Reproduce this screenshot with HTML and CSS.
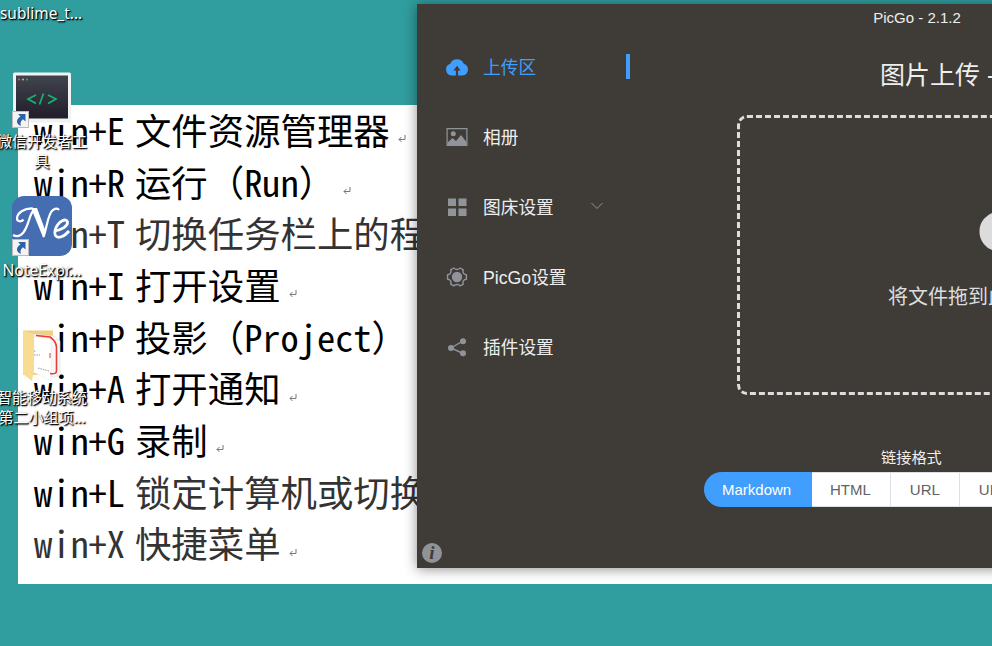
FILE: index.html
```html
<!DOCTYPE html>
<html lang="zh-CN">
<head>
<meta charset="utf-8">
<title>PicGo</title>
<link rel="stylesheet" href="styles.css">
</head>
<body>
<main class="desktop">
  <section class="doc">
    <p><span>win+E</span><span>文件资源管理器</span><svg class="ret" viewBox="0 0 8 8"><path d="M7 0v4.500H1M3.500 2L1 4.500L3.500 7"/></svg></p>
    <p><span>win+R</span><span>运行（Run）</span><svg class="ret" viewBox="0 0 8 8"><path d="M7 0v4.500H1M3.500 2L1 4.500L3.500 7"/></svg></p>
    <p class="soft"><span>win+T</span><span>切换任务栏上的程序</span></p>
    <p><span>win+I</span><span>打开设置</span><svg class="ret" viewBox="0 0 8 8"><path d="M7 0v4.500H1M3.500 2L1 4.500L3.500 7"/></svg></p>
    <p><span>win+P</span><span>投影（Project）</span></p>
    <p><span>win+A</span><span>打开通知</span><svg class="ret" viewBox="0 0 8 8"><path d="M7 0v4.500H1M3.500 2L1 4.500L3.500 7"/></svg></p>
    <p><span>win+G</span><span>录制</span><svg class="ret" viewBox="0 0 8 8"><path d="M7 0v4.500H1M3.500 2L1 4.500L3.500 7"/></svg></p>
    <p><span>win+L</span><span class="soft">锁定计算机或切换</span></p>
    <p class="soft"><span>win+X</span><span>快捷菜单</span><svg class="ret" viewBox="0 0 8 8"><path d="M7 0v4.500H1M3.500 2L1 4.500L3.500 7"/></svg></p>
  </section>

  <div class="shortcut sublime"><span>sublime_t...</span></div>
  <div class="shortcut wechat">
    <svg width="60" height="56" viewBox="0 0 60 56">
      <defs><linearGradient id="scr" x2="0" y2="1"><stop offset="0" stop-color="#41444e"/><stop offset="1" stop-color="#211d2a"/></linearGradient></defs>
      <rect x="1" y="0.500" width="58" height="50" rx="1.500" fill="#f1f2f2"/>
      <rect x="4" y="3.500" width="52" height="43" fill="url(#scr)"/>
      <circle cx="7" cy="7.500" r="1" fill="#e0575b"/><circle cx="11" cy="7.500" r="1" fill="#d8c44a"/><circle cx="15" cy="7.500" r="1" fill="#3faa58"/>
      <path d="M24 23l-8 4 8 4.500M36 23l8 4-8 4.500M31.500 21.500l-4 11" fill="none" stroke="#14b574" stroke-width="1.700"/>
      <rect x="0.500" y="39.500" width="16" height="16" fill="#f4f4f4" stroke="#bbb"/>
      <path d="M6 42h7.500v7.500L11 47.300c-2.500 1.700-3 4-2 6.700-5.500-2-5-7-.5-9.500z" fill="#2c62a5"/>
    </svg>
    <span>微信开发者工<br>具</span>
  </div>
  <div class="shortcut note">
    <svg width="60" height="60" viewBox="0 0 60 60">
      <rect width="60" height="60" rx="12" fill="#456db2"/>
      <path d="M1 39c5 3 10 0 13-7C18 24 18 16 23 13M21 12.500C12 12 5 17 5 22.500c0 3 4 4 6.500 1" fill="none" stroke="#fff" stroke-width="2.200"/>
      <path d="M19 12h6L33.500 35l-2.200 7z" fill="#fff"/>
      <path d="M31.500 41C35 31 36 17 41 14c2.500-1.500 5-1.500 6 0" fill="none" stroke="#fff" stroke-width="2.200"/>
      <path d="M42 35c8-1 14-5 13.500-9-.8-4.500-9-1-12 7-2 7 1 9 5 8 4-1 6-3 8.500-6" fill="none" stroke="#fff" stroke-width="2.800"/>
      <rect x="0.500" y="43.500" width="16" height="16" fill="#f4f4f4" stroke="#bbb"/>
      <path d="M6 46h7.500v7.500L11 51.300c-2.500 1.700-3 4-2 6.700-5.500-2-5-7-.5-9.500z" fill="#2c62a5"/>
    </svg>
    <span>NoteExpr...</span>
  </div>
  <div class="shortcut folder">
    <svg width="40" height="54" viewBox="0 0 40 54">
      <path d="M1 1.500h30V46H1z" fill="#f0d080"/>
      <path d="M11 5l21 2 6 5v34l-6 2-21-5z" fill="#f7f7f7" stroke="#ddd" stroke-width=".6"/>
      <path d="M12 7l17 3v42l-18-9z" fill="#fff" stroke="#e4e4e4" stroke-width=".5"/>
      <path d="M14 6.500l14 1.500q6 4 6.500 10v24q0 3.500-6.500 2.500" fill="none" stroke="#e83c36" stroke-width="1.600"/>
      <path d="M12 22h2m-2 4h6M16 39l11 3" stroke="#999" stroke-dasharray="1.500 1"/>
      <path d="M28 24v5" stroke="#e83c36"/>
      <path d="M1 1.500l11 3.500v35l-2 12-9-7z" fill="#f7dc91"/>
    </svg>
    <span>智能移动系统<br>第二小组项...</span>
  </div>

  <section class="window">
    <header>PicGo - 2.1.2</header>
    <div class="body">
      <nav>
        <a class="active"><svg viewBox="0 0 24 24"><path fill="currentColor" d="M18.700 8.800A7 6.500 0 0 0 5.300 8.800 6 6 0 0 0 6.500 20.500H10.900V15.500H8.400L12 10.800 15.600 15.500H13.100V20.500H17.500A6 6 0 0 0 18.700 8.800z"/></svg><span>上传区</span></a>
        <a><svg viewBox="0 0 24 24"><path fill="none" stroke="currentColor" stroke-width="1.200" d="M2.100 3.600h19.800v16.800H2.100z"/><circle cx="8.300" cy="8.700" r="2.500" fill="currentColor"/><path fill="currentColor" d="M2.500 20v-2.500L7.500 13l3.500 3 5-6 5.500 7V20z"/></svg><span>相册</span></a>
        <a><svg viewBox="0 0 24 24"><path fill="currentColor" d="M3 3.500h8v7.500H3zM13.500 3.500h8v7.500h-8zM3 13.500h8v7.500H3zM13.500 13.500h8v7.500h-8z"/></svg><span>图床设置</span><svg class="chev" viewBox="0 0 14 14"><path fill="none" stroke="currentColor" d="M1.500 4l5.500 5.500L12.500 4"/></svg></a>
        <a><svg viewBox="0 0 24 24"><circle cx="12" cy="12" r="5.200" fill="currentColor"/><path transform="translate(1.300 1.300) scale(.89)" fill="none" stroke="currentColor" stroke-width="1.600" stroke-linejoin="round" d="M8.500 1.900c1.300 2.200 5.700 2.200 7 0l3.600 2.100c-1.300 2.300.4 5.400 3.500 5.500v5c-3.100.1-4.800 3.200-3.500 5.500l-3.600 2.100c-1.300-2.200-5.700-2.200-7 0L4.900 20c1.300-2.300-.4-5.400-3.500-5.500v-5C4.500 9.400 6.200 6.300 4.900 4z"/></svg><span>PicGo设置</span></a>
        <a><svg viewBox="0 0 24 24"><path stroke="currentColor" stroke-width="1.400" fill="none" d="M18 6L6 13l12 5.500"/><g fill="currentColor"><circle cx="18" cy="6.200" r="3"/><circle cx="6" cy="13" r="3"/><circle cx="18" cy="18.200" r="3"/></g></svg><span>插件设置</span></a>
      </nav>
      <div class="content">
        <h1>图片上传 -</h1>
        <div class="drop">
          <svg width="84" height="64" viewBox="0 0 84 64"><path fill="#dcdcdc" d="M64 20A23 23 0 0 0 20 20 20 20 0 0 0 20 59H64A20 20 0 0 0 64 20z"/></svg>
          <p>将文件拖到此处</p>
        </div>
        <div class="fmt">链接格式</div>
        <div class="group"><b>Markdown</b><span>HTML</span><span>URL</span><span>UBB</span></div>
      </div>
    </div>
    <div class="info">i</div>
  </section>
</main>
</body>
</html>
```
FILE: styles.css
```css
body { margin: 0; }
.desktop {
  position: relative;
  width: 992px;
  height: 646px;
  overflow: hidden;
  background: #309d9e;
  font-family: "Liberation Sans", "Noto Sans CJK SC", sans-serif;
}
.doc {
  position: absolute;
  left: 18px;
  top: 105px;
  width: 974px;
  height: 479px;
  background: #fff;
  color: #000;
  box-sizing: border-box;
  padding: 0 0 0 16px;
}
.doc p {
  margin: 0;
  height: 51.700px;
  display: flex;
  align-items: center;
  white-space: nowrap;
  font: 36.400px/49px "Noto Sans Mono CJK SC", "Noto Sans CJK SC", monospace;
}
.doc p span { padding-bottom: 3px; }
.doc p span:first-child { margin-right: 10px; }
.doc .soft { color: #333; }
.ret { width: 8px; height: 8px; margin: 17px 0 0 8px; fill: none; stroke: #777; stroke-width: 1; }

.shortcut {
  position: absolute;
  display: flex;
  flex-direction: column;
  align-items: center;
  color: #fff;
  font: 15px/20px "Noto Sans", "Noto Sans CJK SC", sans-serif;
  text-align: center;
  white-space: nowrap;
  text-shadow: 1px 1px 2px #000, 1px 1px 1px #000;
}
.shortcut svg { display: block; }
.sublime { left: 0; top: 4px; font-size: 15.400px; }
.wechat { left: -3px; top: 72px; width: 90px; }
.wechat span { margin-top: 3px; }
.note { left: -3px; top: 196px; width: 90px; }
.note span { margin-top: 4px; font-size: 15.700px; }
.folder { left: -3px; top: 329px; width: 90px; }
.folder span { margin-top: 4px; }

.window {
  position: absolute;
  left: 417px;
  top: 4px;
  width: 1000px;
  height: 564px;
  background: #3f3c37;
  box-shadow: 0 1px 12px rgba(0, 0, 0, .45);
  color: #eee;
}
.window header { height: 28px; font-size: 15px; line-height: 28px; text-align: center; }
.body { display: flex; }
nav { width: 213px; }
nav a {
  display: flex;
  align-items: center;
  height: 70px;
  box-sizing: border-box;
  padding-left: 28px;
  font-size: 17.700px;
  color: #eee;
}
nav a span { padding-bottom: 2px; }
nav a svg { width: 24px; height: 24px; margin-right: 14px; color: #909399; }
nav .active {
  color: #409eff;
  background: linear-gradient(#409eff, #409eff) right 22px / 4px 25px no-repeat;
}
nav .active svg { color: #409eff; }
nav a .chev { width: 14px; height: 14px; margin: -3px 0 0 36px; }
.content { width: 787px; }
h1 { margin: 27px 0 0 250px; font-size: 25px; font-weight: 400; line-height: 32px; }
.drop {
  margin: 24px 0 0 107px;
  width: 573px;
  height: 280px;
  box-sizing: border-box;
  border: 3px dashed #ddd;
  border-radius: 10px;
  padding: 74px 0 0 240px;
  color: #ddd;
}
.drop svg { display: block; margin-left: -5px; }
.drop p { margin: 28px 0 0 -92px; font-size: 20px; line-height: 26px; }
.fmt { margin: 53px 0 0 251px; font-size: 15.200px; line-height: 20px; }
.group {
  display: flex;
  margin: 4px 0 0 74px;
  width: 416px;
  height: 35px;
  font-size: 15px;
  line-height: 33px;
  color: #606266;
}
.group > * { box-sizing: border-box; border: 1px solid #dcdfe6; border-left: 0; padding: 0 19px; background: #fff; }
.group span:nth-child(2) { padding: 0 19px 0 18px; }
.group b {
  font-weight: 400;
  color: #fff;
  background: #409eff;
  border: 1px solid #409eff;
  border-radius: 18px 0 0 18px;
  width: 108px;
  padding: 0 17px;
}
.info {
  position: absolute;
  left: 5px;
  bottom: 5px;
  width: 20px;
  height: 20px;
  border-radius: 50%;
  background: #909399;
  color: #3f3c37;
  font: italic bold 19px/19px "Liberation Serif", serif;
  text-align: center;
}
```
